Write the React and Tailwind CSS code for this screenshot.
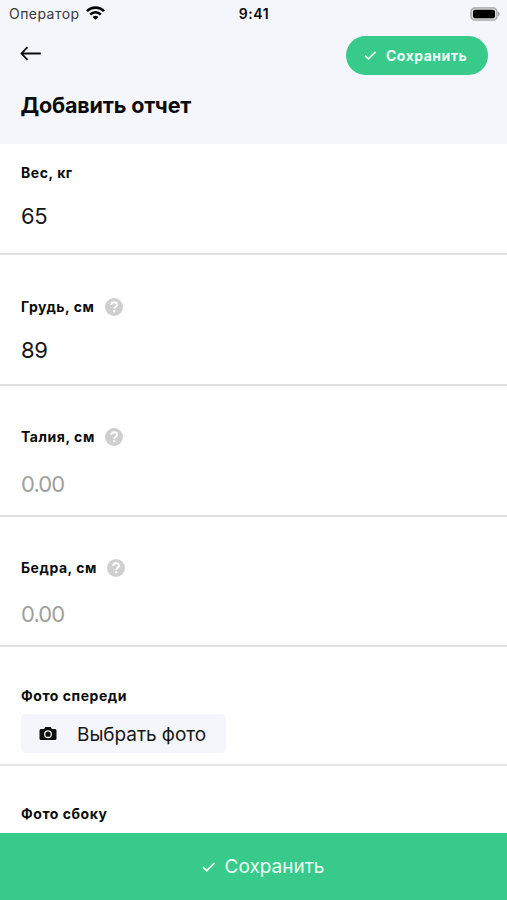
import React from "react";

function Check({ className }) {
  return (
    <svg viewBox="0 0 14 10" className={className} fill="none" stroke="currentColor" strokeWidth="1.7">
      <path d="M1 5.2 4.7 8.7 12.6 1" />
    </svg>
  );
}

function Help() {
  return (
    <svg viewBox="0 0 18 18" className="-mt-px h-[18px] w-[18px] shrink-0">
      <circle cx="9" cy="9" r="9" fill="#cfcfcf" />
      <path d="M6.1 6.8C6.3 5 7.400 4.200 9 4.200c1.800 0 3 .9 3 2.500 0 2-2.800 2-2.800 4.100" fill="none" stroke="#fff" strokeWidth="1.900" />
      <circle cx="9.200" cy="13.300" r="1.200" fill="#fff" />
    </svg>
  );
}

function Label({ children, width, help }) {
  return (
    <div className="flex h-5 items-center gap-[10px]">
      <span className={`${width || ""} whitespace-nowrap text-[14px] font-bold leading-5 tracking-[0.55px]`}>{children}</span>
      {help && <Help />}
    </div>
  );
}

function Field({ label, width, value, placeholder, help, className, gap }) {
  return (
    <div className={`${className} border-b-2 border-[#e1e1e2] pl-[21px]`}>
      <Label width={width} help={help}>{label}</Label>
      <div className={`${gap} h-7 text-[22px] leading-7 ${value ? "text-[#161616] tracking-[-0.3px]" : "text-[#a0a0a0] tracking-[-0.9px]"}`}>
        {value || placeholder}
      </div>
    </div>
  );
}

export default function App() {
  return (
    <div className="flex h-[900px] w-[507px] flex-col overflow-hidden bg-white font-['Inter','Liberation_Sans',sans-serif] text-[#0b0b0c]">
      <header className="h-[144px] shrink-0 bg-[#f5f6fb]">
        <div className="grid h-[28px] grid-cols-3 items-center pl-[9px] pr-[7px]">
          <div className="flex items-center gap-[6px]">
            <span className="text-[14px] leading-5 tracking-[0.45px] text-[#38383a]">Оператор</span>
            <svg viewBox="0 0 19 14" className="-mt-[3px] h-[14px] w-[19px]" fill="none" stroke="#000" strokeWidth="2.600">
              <path d="M1 5.200C5.700.400 13.300.400 18 5.200" />
              <path d="M4.200 8.500c3-3 7.600-3 10.600 0" />
              <path d="M6.600 10.900c1.700-1.600 4.100-1.600 5.800 0L9.500 13.800Z" fill="#000" stroke="none" />
            </svg>
          </div>
          <span className="-ml-[1px] text-center text-[14px] font-semibold leading-5 tracking-[0.6px]">9:41</span>
          <svg viewBox="0 0 30 14" className="-mt-[1px] h-[14px] w-[30px] justify-self-end">
            <rect x="1" y="0.800" width="26" height="12.400" rx="3.800" fill="#d8d8da" stroke="#a5a5a8" strokeWidth="1.300" />
            <rect x="3" y="2.700" width="22" height="8.600" rx="2" fill="#000" />
            <path d="M28 4.800c2.300.600 2.300 3.800 0 4.400Z" fill="#a5a5a8" />
          </svg>
        </div>
        <div className="flex items-start justify-between pl-[20px] pr-[19px] pt-2">
          <svg viewBox="0 0 22 16" className="mt-[10px] h-4 w-[22px]" fill="none" stroke="#0b0b0c" strokeWidth="1.800">
            <path d="M20.800 7.500H1.500M7.500 1.200 1.500 7.500 7.500 13.800" />
          </svg>
          <button className="flex h-[39px] w-[142px] items-center rounded-full bg-[#38ca8a] pl-[18px] text-[#effff8]">
            <Check className="-mt-px h-[9px] w-[13px]" />
            <span className="ml-[9px] whitespace-nowrap text-[14px] font-bold leading-5 tracking-[0.5px]">Сохранить</span>
          </button>
        </div>
        <h1 className="mt-[15px] pl-[20.500px] text-[21.500px] font-bold leading-[30px] tracking-[-0.15px]">Добавить отчет</h1>
      </header>
      <main className="min-h-0 flex-1 overflow-hidden">
        <Field label="Вес, кг" value="65" className="h-[111px] pt-[19px]" gap="mt-[19px]" />
        <Field label="Грудь, см" width="w-[73.500px]" value="89" help className="h-[131px] pt-[42px]" gap="mt-[19px]" />
        <Field label="Талия, см" width="w-[74px]" placeholder="0.00" help className="h-[131px] pt-[41px]" gap="mt-[23px]" />
        <Field label="Бедра, см" width="w-[76px]" placeholder="0.00" help className="h-[130px] pt-[41px]" gap="mt-[22px]" />
        <div className="h-[119px] border-b-2 border-[#e6e6e7] pl-[21px] pt-[39px]">
          <Label>Фото спереди</Label>
          <button className="mt-[8px] flex h-[39px] w-[205px] items-center rounded-[5px] bg-[#f5f6fb] pl-[18px]">
            <svg viewBox="0 0 18 14" className="h-[14px] w-[18px]">
              <path d="M2 2h3l1.500-2h5L13 2h3a1.500 1.500 0 0 1 1.500 1.500v8A1.500 1.500 0 0 1 16 13H2A1.500 1.500 0 0 1 .5 11.500v-8A1.500 1.500 0 0 1 2 2Z" fill="#0b0b0c" />
              <circle cx="9" cy="7.200" r="3.300" fill="none" stroke="#f5f6fb" strokeWidth="1.300" />
            </svg>
            <span className="ml-[20px] mt-[2px] whitespace-nowrap text-[19px] leading-6 tracking-[-0.05px] text-[#161616]">Выбрать фото</span>
          </button>
        </div>
        <div className="pl-[21px] pt-[38px]">
          <Label>Фото сбоку</Label>
        </div>
      </main>
      <button className="flex h-[67px] shrink-0 items-center justify-center gap-[9px] bg-[#38ca8a] pl-[19px] text-[#e9fff5]">
        <Check className="h-[10px] w-[14px]" />
        <span className="mt-px text-[19px] leading-6">Сохранить</span>
      </button>
    </div>
  );
}
